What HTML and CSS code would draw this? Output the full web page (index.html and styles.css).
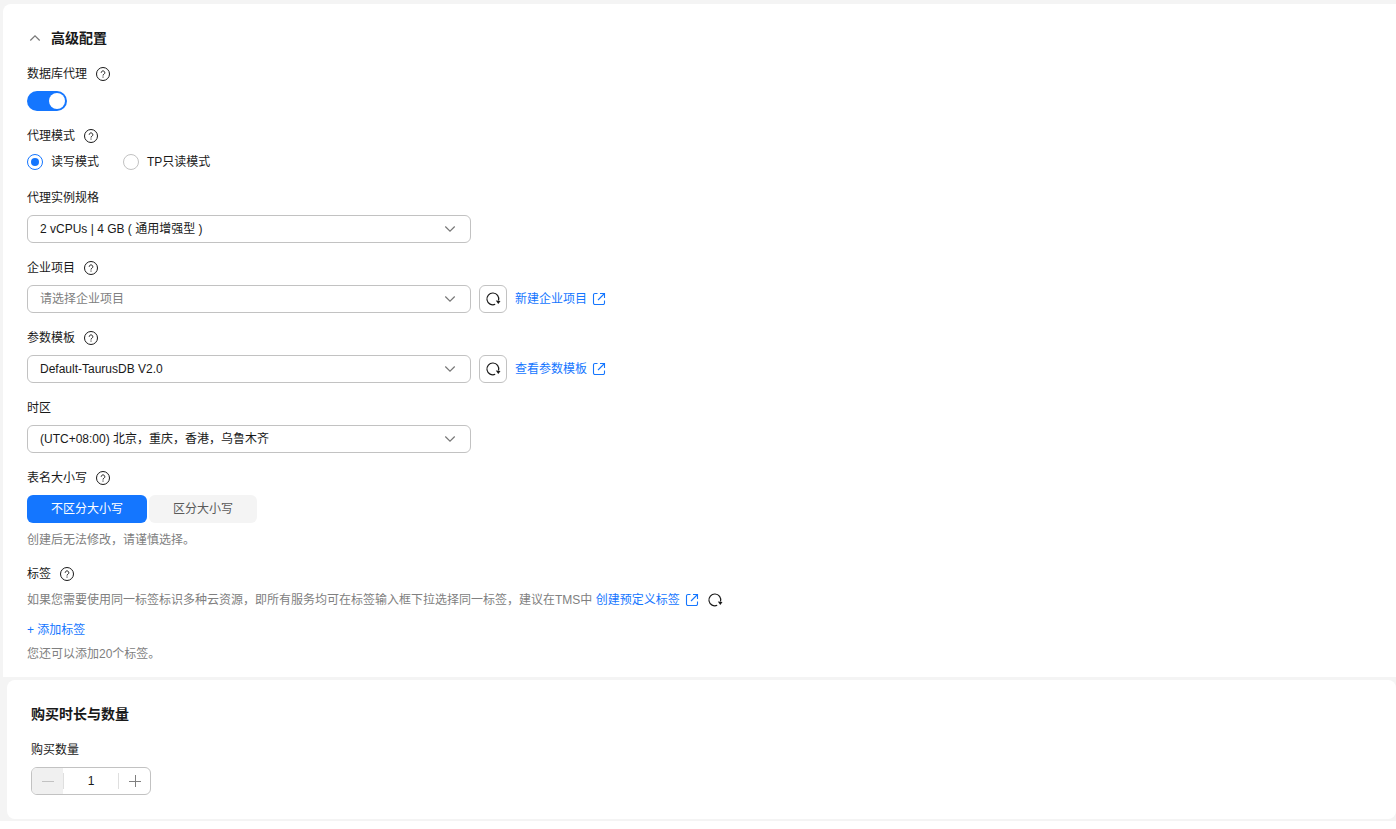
FILE: index.html
```
<!DOCTYPE html>
<html lang="zh-CN">
<head>
<meta charset="utf-8">
<title>高级配置</title>
<link rel="stylesheet" href="styles.css">
</head>
<body>
<svg class="sprite" aria-hidden="true">
  <symbol id="help" viewBox="0 0 16 16"><circle cx="8" cy="8" r="6.5"/><path d="M6.200 6.700a1.800 1.800 0 1 1 2.800 1.500c-.7.4-1 .7-1 1.300M8 10.500v1.100"/></symbol>
  <symbol id="chevron" viewBox="0 0 12 12"><path d="M1.300 3.500L6 8.200l4.700-4.700"/></symbol>
  <symbol id="reload" viewBox="0 0 16 16"><path d="M10.200 13.300A5.900 5.900 0 1 1 13.500 9.500"/><path d="M10.800 9.500l4.700.6-2.200 3z" fill="currentColor" stroke="none"/></symbol>
  <symbol id="external" viewBox="0 0 14 14"><path d="M5.500 1.500H3a1.500 1.500 0 0 0-1.500 1.500v8A1.500 1.500 0 0 0 3 12.500h8a1.500 1.500 0 0 0 1.500-1.500V8.500M8 1.500h4.500v4.500M12.500 1.500L6 8"/></symbol>
</svg>
<main class="page">
  <section class="card card-config">
    <h2 class="title"><button class="collapse" type="button" aria-expanded="true"><svg class="icon-chevron up"><use href="#chevron"/></svg>高级配置</button></h2>
    <div class="form">
      <div class="field">
        <div class="label-row"><label for="proxy">数据库代理</label><svg class="icon-help"><use href="#help"/></svg></div>
        <input class="switch" type="checkbox" role="switch" id="proxy" checked>
      </div>
      <div class="field">
        <div class="label-row"><span id="mode-label">代理模式</span><svg class="icon-help"><use href="#help"/></svg></div>
        <div class="radios" role="radiogroup" aria-labelledby="mode-label">
          <label class="radio-item"><input class="radio" type="radio" name="mode" checked>读写模式</label>
          <label class="radio-item"><input class="radio" type="radio" name="mode">TP只读模式</label>
        </div>
      </div>
      <div class="field">
        <div class="label-row"><label for="spec">代理实例规格</label></div>
        <div class="control-row">
          <div class="select-wrap"><select class="select" id="spec"><option>2 vCPUs | 4 GB ( 通用增强型 )</option></select><svg class="icon-chevron select-arrow"><use href="#chevron"/></svg></div>
        </div>
      </div>
      <div class="field">
        <div class="label-row"><label for="project">企业项目</label><svg class="icon-help"><use href="#help"/></svg></div>
        <div class="control-row">
          <div class="select-wrap"><select class="select placeholder" id="project"><option>请选择企业项目</option></select><svg class="icon-chevron select-arrow"><use href="#chevron"/></svg></div>
          <button class="refresh" type="button" aria-label="刷新"><svg class="icon-reload"><use href="#reload"/></svg></button>
          <a class="link" href="#">新建企业项目<svg class="icon-external"><use href="#external"/></svg></a>
        </div>
      </div>
      <div class="field">
        <div class="label-row"><label for="template">参数模板</label><svg class="icon-help"><use href="#help"/></svg></div>
        <div class="control-row">
          <div class="select-wrap"><select class="select" id="template"><option>Default-TaurusDB V2.0</option></select><svg class="icon-chevron select-arrow"><use href="#chevron"/></svg></div>
          <button class="refresh" type="button" aria-label="刷新"><svg class="icon-reload"><use href="#reload"/></svg></button>
          <a class="link" href="#">查看参数模板<svg class="icon-external"><use href="#external"/></svg></a>
        </div>
      </div>
      <div class="field">
        <div class="label-row"><label for="zone">时区</label></div>
        <div class="control-row">
          <div class="select-wrap"><select class="select" id="zone"><option>(UTC+08:00) 北京，重庆，香港，乌鲁木齐</option></select><svg class="icon-chevron select-arrow"><use href="#chevron"/></svg></div>
        </div>
      </div>
      <div class="field">
        <div class="label-row"><span id="case-label">表名大小写</span><svg class="icon-help"><use href="#help"/></svg></div>
        <div class="segments" role="group" aria-labelledby="case-label">
          <button class="segment active" type="button" aria-pressed="true">不区分大小写</button>
          <button class="segment" type="button" aria-pressed="false">区分大小写</button>
        </div>
        <p class="hint">创建后无法修改，请谨慎选择。</p>
      </div>
      <div class="field">
        <div class="label-row"><span>标签</span><svg class="icon-help"><use href="#help"/></svg></div>
        <div class="tag-row">
          <p class="hint">如果您需要使用同一标签标识多种云资源，即所有服务均可在标签输入框下拉选择同一标签，建议在TMS中 <a class="link" href="#">创建预定义标签<svg class="icon-external"><use href="#external"/></svg></a></p>
          <button class="plain" type="button" aria-label="刷新标签"><svg class="icon-reload"><use href="#reload"/></svg></button>
        </div>
        <div class="tag-add">
          <button class="plain add" type="button">+ 添加标签</button>
          <p class="hint">您还可以添加20个标签。</p>
        </div>
      </div>
    </div>
  </section>
  <section class="card card-purchase">
    <h2 class="title">购买时长与数量</h2>
    <div class="field">
      <div class="label-row"><label for="count">购买数量</label></div>
      <div class="stepper">
        <button class="step minus" type="button" aria-label="减少" disabled><svg class="icon-step"><path d="M0 6.500h12"/></svg></button>
        <input class="count" id="count" type="text" inputmode="numeric" value="1">
        <button class="step" type="button" aria-label="增加"><svg class="icon-step"><path d="M0 6.500h12M6.500 0v12"/></svg></button>
      </div>
    </div>
  </section>
</main>
</body>
</html>
```

FILE: styles.css
```
* { box-sizing: border-box; }
body {
  margin: 0;
  background: #fff;
  color: #191919;
  font: 12px/18px "Liberation Sans", Arial, "Noto Sans CJK SC", sans-serif;
}
button, input, select { font: inherit; color: inherit; margin: 0; }
button { padding: 0; border: 0; background: none; cursor: pointer; }
p { margin: 0; }
svg { flex: none; fill: none; stroke: currentColor; }
.sprite { position: absolute; width: 0; height: 0; }

.page {
  display: flex;
  flex-direction: column;
  gap: 3px;
  padding: 4px 0 2px 3px;
  background: #f4f4f4;
}
.card { background: #fff; padding: 24px; }
.card-config { border-radius: 8px 0 0 0; padding-bottom: 14px; }
.card-purchase { margin-left: 4px; border-radius: 8px; }

.title { margin: 0 0 17px; font-size: 14px; line-height: 20px; font-weight: 700; }
.collapse { display: flex; align-items: center; gap: 10px; padding-left: 2px; }

.form, .field { display: flex; flex-direction: column; }
.form { gap: 16px; }
.field { gap: 8px; align-items: flex-start; }
.label-row { display: flex; align-items: center; gap: 8px; height: 18px; }

.icon-help { width: 16px; height: 16px; stroke-width: 1; }
.icon-chevron { width: 12px; height: 12px; color: #777; stroke-width: 1.2; }
.icon-chevron.up { transform: rotate(180deg); }
.icon-reload { display: block; width: 16px; height: 16px; stroke-width: 1.2; color: #191919; }
.icon-external { width: 14px; height: 14px; stroke-width: 1.1; }
.icon-step { display: block; width: 12px; height: 12px; }

.switch {
  appearance: none;
  display: flex;
  align-items: center;
  width: 40px;
  height: 20px;
  padding: 2px;
  border-radius: 10px;
  background: #c2c2c2;
}
.switch::before { content: ""; width: 16px; height: 16px; border-radius: 50%; background: #fff; }
.switch:checked { background: #1476ff; justify-content: flex-end; }

.radios { display: flex; gap: 24px; padding-bottom: 2px; }
.radio-item { display: flex; align-items: center; gap: 8px; }
.radio {
  appearance: none;
  display: grid;
  place-items: center;
  width: 16px;
  height: 16px;
  border: 1px solid #c2c2c2;
  border-radius: 50%;
}
.radio:checked { border-color: #1476ff; }
.radio:checked::before { content: ""; width: 8px; height: 8px; border-radius: 50%; background: #1476ff; }

.control-row { display: flex; align-items: center; gap: 8px; max-width: 100%; }
.select-wrap { position: relative; width: 444px; }
.select {
  appearance: none;
  display: block;
  width: 100%;
  height: 28px;
  padding: 0 32px 0 12px;
  border: 1px solid #c2c2c2;
  border-radius: 6px;
  background: #fff;
}
.select.placeholder { color: #808080; }
.select-arrow { position: absolute; right: 15px; top: 8px; pointer-events: none; }
.refresh {
  display: grid;
  place-items: center;
  width: 28px;
  height: 28px;
  border: 1px solid #c2c2c2;
  border-radius: 6px;
}
.link { display: inline-flex; align-items: center; gap: 5px; color: #1476ff; text-decoration: none; }

.segments { display: flex; gap: 2px; }
.segment { height: 28px; padding: 0 24px; border-radius: 6px; background: #f4f4f4; color: #595959; }
.segment.active { background: #1476ff; color: #fff; }
.hint { color: #808080; }
.tag-row { display: flex; align-items: center; gap: 8px; height: 18px; }
.tag-row .link { vertical-align: top; }
.tag-add { display: flex; flex-direction: column; align-items: flex-start; gap: 6px; padding-top: 4px; }
.add { color: #1476ff; }

.stepper {
  display: flex;
  align-items: center;
  width: 120px;
  height: 28px;
  border: 1px solid #c2c2c2;
  border-radius: 6px;
  overflow: hidden;
}
.step { display: grid; place-items: center; width: 31px; height: 100%; color: #808080; }
.step.minus { background: #f0f0f0; color: #c2c2c2; }
.count {
  flex: 1;
  min-width: 0;
  height: 16px;
  padding: 0;
  border: solid #dfdfdf;
  border-width: 0 1px;
  text-align: center;
  outline: 0;
}
```
